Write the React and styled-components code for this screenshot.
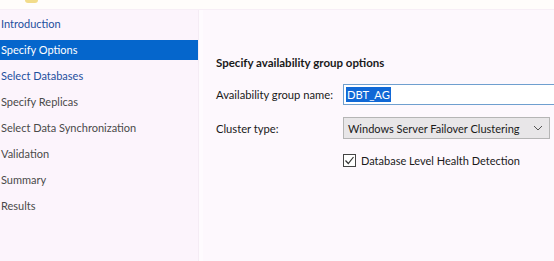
import React from 'react';
import styled, { createGlobalStyle } from 'styled-components';

const GlobalStyle = createGlobalStyle`
  body {
    margin: 0;
    background: #fdf8fd;
    font-family: Lato, "Noto Sans", sans-serif;
  }
`;

const steps = [
  { label: 'Introduction', state: 'done' },
  { label: 'Specify Options', state: 'active' },
  { label: 'Select Databases', state: 'done' },
  { label: 'Specify Replicas' },
  { label: 'Select Data Synchronization' },
  { label: 'Validation' },
  { label: 'Summary' },
  { label: 'Results' },
];

const App = () => {
  return (
    <Window>
      <GlobalStyle />
      <TopStrip>
        <WizardIcon />
      </TopStrip>
      <Body>
        <Sidebar>
          {steps.map((step) => (
            <StepItem key={step.label} $state={step.state}>
              {step.label}
            </StepItem>
          ))}
        </Sidebar>
        <Divider />
        <Content>
          <Heading>Specify availability group options</Heading>
          <FieldRow>
            <FieldLabel>Availability group name:</FieldLabel>
            <TextBox>
              <Selected>DBT_AG</Selected>
            </TextBox>
          </FieldRow>
          <FieldRow>
            <FieldLabel>Cluster type:</FieldLabel>
            <Dropdown>
              <span>Windows Server Failover Clustering</span>
              <svg width="10" height="6" viewBox="0 0 10 6">
                <path d="M1 1 L5 5 L9 1" fill="none" stroke="#555" strokeWidth="1" />
              </svg>
            </Dropdown>
          </FieldRow>
          <CheckRow>
            <CheckBox>
              <svg width="11" height="11" viewBox="0 0 11 11">
                <path d="M1.5 5.5 L4.3 8.5 L9.5 2" fill="none" stroke="#333" strokeWidth="1.2" />
              </svg>
            </CheckBox>
            <span>Database Level Health Detection</span>
          </CheckRow>
        </Content>
      </Body>
    </Window>
  );
};

export default App;

const Window = styled.div`
  width: 554px;
  height: 261px;
  overflow: hidden;
  display: flex;
  flex-direction: column;
  background: #fdf8fd;
  white-space: nowrap;
`;

const TopStrip = styled.div`
  height: 10px;
  flex-shrink: 0;
  background: #fffdfb;
  border-bottom: 1px solid #f7eef6;
  box-sizing: border-box;
  padding-left: 25px;
`;

const WizardIcon = styled.div`
  width: 13px;
  height: 3px;
  background: #f2dc8a;
  border-radius: 0 0 3px 3px;
`;

const Body = styled.div`
  flex: 1;
  display: flex;
`;

const Sidebar = styled.div`
  width: 198px;
  flex-shrink: 0;
  background: #fcf4fc;
  padding-top: 4px;
  display: flex;
  flex-direction: column;
  gap: 6px;
`;

const StepItem = styled.div`
  height: 20px;
  line-height: 20px;
  padding-left: 1px;
  font-size: 11px;
  color: ${({ $state }) =>
    $state === 'active' ? '#ffffff' : $state === 'done' ? '#1e4f9e' : '#4a4a4a'};
  background: ${({ $state }) => ($state === 'active' ? '#0566cc' : 'transparent')};
`;

const Divider = styled.div`
  width: 4px;
  flex-shrink: 0;
  background: #fefbfe;
  border-left: 1px solid #f5ecf5;
`;

const Content = styled.div`
  flex: 1;
  padding: 44px 0 0 13px;
  display: flex;
  flex-direction: column;
  font-size: 11.2px;
  color: #1a1a1a;
`;

const Heading = styled.div`
  font-weight: bold;
  font-size: 11.5px;
  height: 18px;
  line-height: 18px;
  margin-bottom: 11px;
`;

const FieldRow = styled.div`
  display: flex;
  align-items: center;
  height: 22px;
  margin-bottom: 12px;
`;

const FieldLabel = styled.div`
  width: 127px;
  flex-shrink: 0;
`;

const TextBox = styled.div`
  width: 230px;
  height: 21px;
  box-sizing: border-box;
  border: 1px solid #6f9fcf;
  background: #ffffff;
  display: flex;
  align-items: center;
  padding-left: 2px;
  flex-shrink: 0;
`;

const Selected = styled.span`
  background: #1068d6;
  color: #ffffff;
  line-height: 15px;
  padding: 0 1px;
`;

const Dropdown = styled.div`
  width: 207px;
  height: 22px;
  box-sizing: border-box;
  border: 1px solid #b5b5b5;
  background: #e8e6e8;
  display: flex;
  align-items: center;
  justify-content: space-between;
  padding: 0 6px 0 4px;
  font-size: 11px;
`;

const CheckRow = styled.div`
  display: flex;
  align-items: center;
  gap: 5px;
  margin-left: 127px;
  margin-top: 3px;
  font-size: 11px;
`;

const CheckBox = styled.div`
  width: 13px;
  height: 13px;
  box-sizing: border-box;
  border: 1px solid #444;
  background: #ffffff;
  display: flex;
  align-items: center;
  justify-content: center;
`;
